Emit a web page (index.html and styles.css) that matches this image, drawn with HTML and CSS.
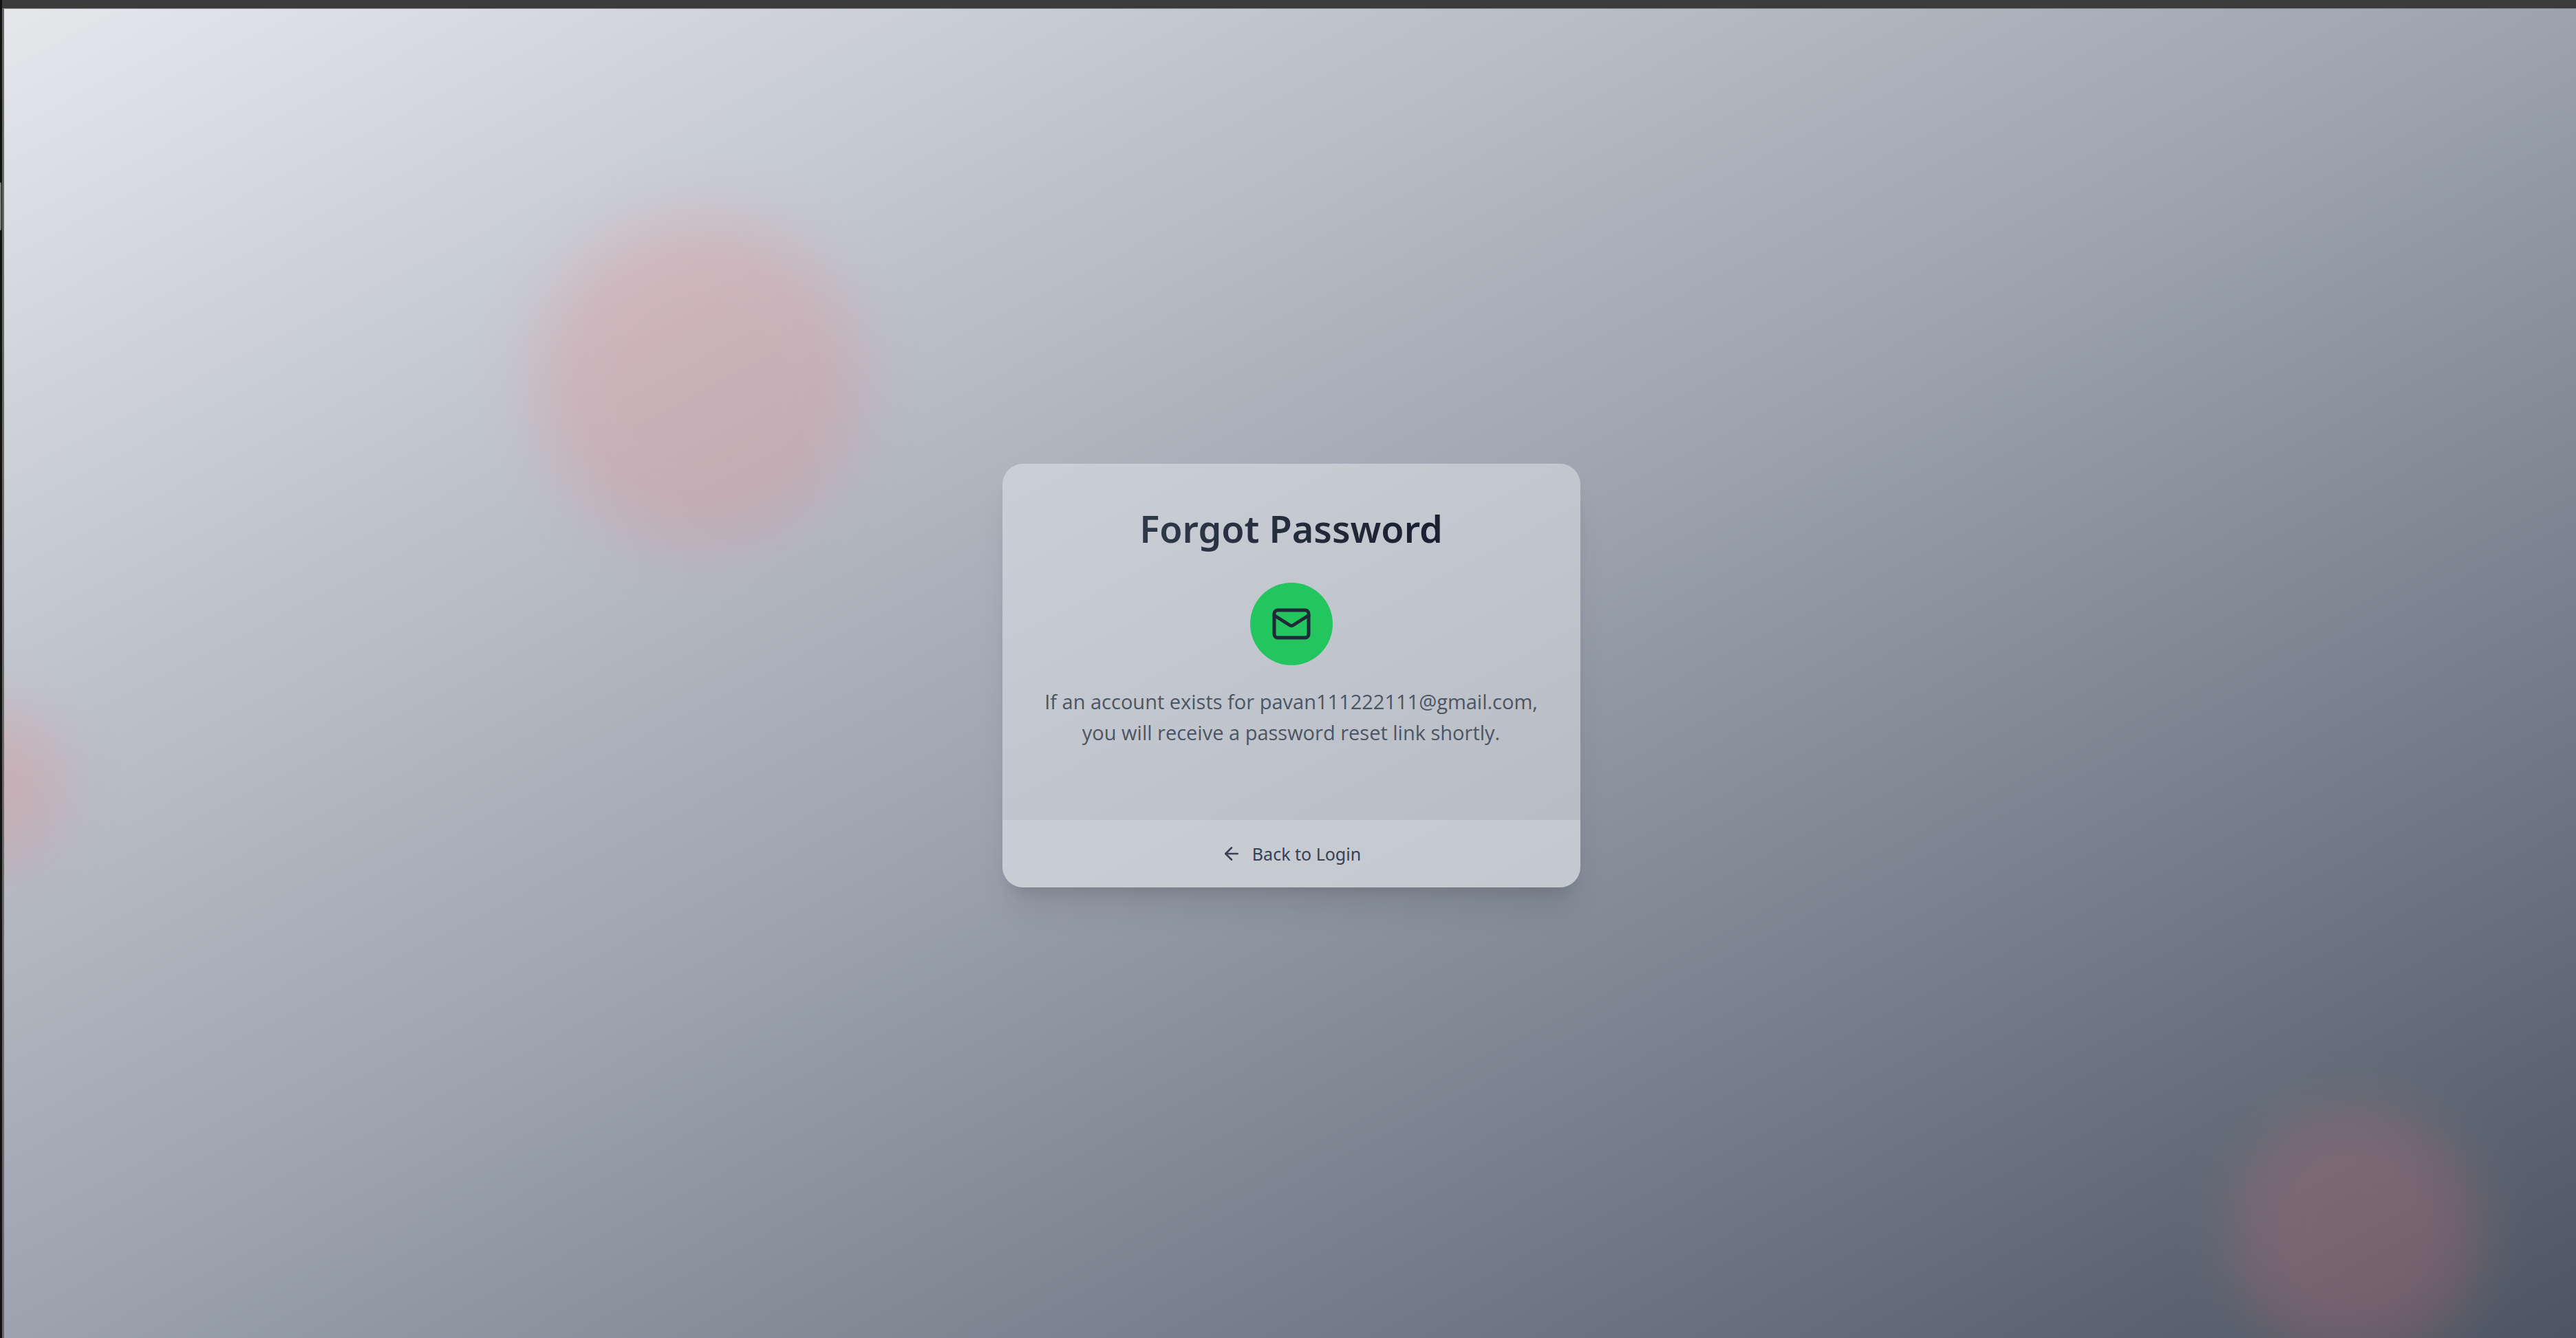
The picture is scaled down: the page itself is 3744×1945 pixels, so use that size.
FILE: index.html
```html
<!DOCTYPE html>
<html lang="en">
<head>
<meta charset="utf-8">
<meta name="viewport" content="width=device-width, initial-scale=1">
<title>Forgot Password</title>
<link rel="stylesheet" href="styles.css">
</head>
<body>
<div class="window">
  <span class="window-handle"></span>
  <main class="page">
    <span class="blob blob-large"></span>
    <span class="blob blob-medium"></span>
    <span class="blob blob-small"></span>
    <section class="card">
      <div class="card-body">
        <h1 class="title">Forgot Password</h1>
        <div class="badge">
          <svg class="badge-icon" viewBox="0 0 24 24" aria-hidden="true"><rect x="2" y="4" width="20" height="16" rx="2"/><path d="m22 7-8.97 5.7a1.94 1.94 0 0 1-2.06 0L2 7"/></svg>
        </div>
        <p class="message">If an account exists for pavan111222111@gmail.com, you will receive a password reset link shortly.</p>
      </div>
      <div class="card-footer">
        <a class="back-link" href="#login">
          <svg class="back-icon" viewBox="0 0 24 24" aria-hidden="true"><path d="m12 19-7-7 7-7"/><path d="M19 12H5"/></svg>
          Back to Login
        </a>
      </div>
    </section>
  </main>
</div>
</body>
</html>
```
FILE: styles.css
```css
* {
  box-sizing: border-box;
}

body {
  margin: 0;
  font-family: "Noto Sans", "Open Sans", sans-serif;
}

.window {
  position: relative;
  display: flex;
  min-height: 100vh;
  padding: 12px 0 0 3px;
  background: linear-gradient(to right, #111111 3px, #3b3b3b 3px);
}

.window-handle {
  position: absolute;
  top: 265px;
  left: 0;
  width: 2px;
  height: 70px;
  border-radius: 0 2px 2px 0;
  background: #777777;
}

.page {
  position: relative;
  display: flex;
  flex: 1;
  align-items: center;
  justify-content: center;
  overflow: hidden;
  padding: 6px 0 0 3px;
  border-top: 1px solid #8a8a8a;
  border-left: 3px solid #666666;
  background: linear-gradient(to bottom right, #e5e7eb, #9ca3af, #4b5563) padding-box;
}

.blob {
  position: absolute;
  border-radius: 50%;
  background: #f87171;
  opacity: 0.2;
  filter: blur(45px);
}

.blob-large {
  top: 302px;
  left: 770px;
  width: 480px;
  height: 480px;
}

.blob-medium {
  right: 140px;
  bottom: -28px;
  width: 360px;
  height: 360px;
}

.blob-small {
  top: 1010px;
  left: -150px;
  width: 240px;
  height: 240px;
}

.card {
  position: relative;
  width: 840px;
  max-width: 100%;
  overflow: hidden;
  border-radius: 30px;
  background: rgba(229, 231, 235, 0.5);
  box-shadow: 0 38px 46px -10px rgba(0, 0, 0, 0.1), 0 15px 19px -11px rgba(0, 0, 0, 0.1);
}

.card-body {
  display: flex;
  flex-direction: column;
  align-items: center;
  padding: 60px 60px 105px;
}

.title {
  width: 100%;
  margin: 0 0 45px;
  font-size: 54px;
  font-weight: 600;
  line-height: 68px;
  text-align: center;
  color: transparent;
  background: linear-gradient(to right, #374151, #111827);
  background-clip: text;
}

.badge {
  display: flex;
  align-items: center;
  justify-content: center;
  width: 120px;
  height: 120px;
  margin-bottom: 30px;
  border-radius: 50%;
  background: #22c55e;
}

.badge-icon,
.back-icon {
  fill: none;
  stroke: currentColor;
  stroke-width: 2;
  stroke-linecap: round;
  stroke-linejoin: round;
}

.badge-icon {
  width: 60px;
  height: 60px;
  color: #1f2937;
}

.message {
  margin: 0;
  font-family: "Open Sans", "Noto Sans", sans-serif;
  font-size: 29px;
  line-height: 45px;
  text-align: center;
  color: #4b5563;
}

.card-footer {
  display: flex;
  justify-content: center;
  padding: 30px 60px;
  background: rgba(209, 213, 219, 0.5);
}

.back-link {
  display: flex;
  align-items: center;
  gap: 15px;
  font-size: 25px;
  line-height: 38px;
  color: #374151;
  text-decoration: none;
}

.back-icon {
  width: 30px;
  height: 30px;
}
```
